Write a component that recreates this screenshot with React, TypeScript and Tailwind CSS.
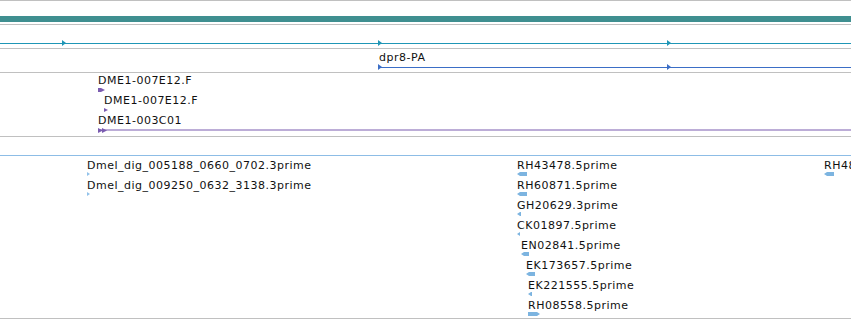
import React from 'react';

type Dir = 'left' | 'right';

interface GlyphProps {
  w: number;
  h: number;
  dir: Dir;
  color: string;
  head?: number;
  className?: string;
  style?: React.CSSProperties;
}

// feature glyph: a box with a pointed end (just a triangle when head >= w)
function Glyph({ w, h, dir, color, head, className = '', style }: GlyphProps) {
  const hd = Math.min(head ?? w, w);
  const pts = dir === 'right'
    ? `0,0 ${w - hd},0 ${w},${h / 2} ${w - hd},${h} 0,${h}`
    : `${w},0 ${hd},0 0,${h / 2} ${hd},${h} ${w},${h}`;
  return (
    <svg className={`block shrink-0 ${className}`} style={style} width={w} height={h} viewBox={`0 0 ${w} ${h}`}>
      <polygon points={pts} fill={color} />
    </svg>
  );
}

const TEAL = '#1f96b6';
const TRANSCRIPT = '#3b6ec6';
const PURPLE = '#7b5cb0';
const EST = '#7cb4e0';
const EST_LIGHT = '#92c2ea';

interface Feature {
  label: string;
  dx: number; // offset from the column start
  w: number;
  dir: Dir;
}

// each column sits at its genomic x on the canvas, rows stack by flow
const EST_COLUMNS: { x: number; color: string; rows: Feature[] }[] = [
  {
    x: 87,
    color: EST_LIGHT,
    rows: [
      { label: 'Dmel_dig_005188_0660_0702.3prime', dx: 0, w: 3, dir: 'right' },
      { label: 'Dmel_dig_009250_0632_3138.3prime', dx: 0, w: 3, dir: 'right' },
    ],
  },
  {
    x: 517,
    color: EST,
    rows: [
      { label: 'RH43478.5prime', dx: 0, w: 10, dir: 'left' },
      { label: 'RH60871.5prime', dx: 0, w: 10, dir: 'left' },
      { label: 'GH20629.3prime', dx: 0, w: 4, dir: 'left' },
      { label: 'CK01897.5prime', dx: 0, w: 3, dir: 'left' },
      { label: 'EN02841.5prime', dx: 4, w: 8, dir: 'left' },
      { label: 'EK173657.5prime', dx: 9, w: 9, dir: 'left' },
      { label: 'EK221555.5prime', dx: 11, w: 4, dir: 'left' },
      { label: 'RH08558.5prime', dx: 11, w: 12, dir: 'right' },
    ],
  },
  {
    x: 824,
    color: EST,
    rows: [{ label: 'RH48819.5prime', dx: 0, w: 10, dir: 'left' }],
  },
];

const CLONES: Feature[] = [
  { label: 'DME1-007E12.F', dx: 0, w: 7, dir: 'right' },
  { label: 'DME1-007E12.F', dx: 6, w: 4, dir: 'right' },
];

export default function App() {
  return (
    <div
      className="w-[851px] h-[320px] overflow-hidden bg-white text-[11px] leading-[13px] tracking-[0.5px] text-[#111]"
      style={{ fontFamily: '"DejaVu Sans", "Liberation Sans", sans-serif' }}
    >
      {/* gene span bar */}
      <div className="h-[24px] border-t border-[#c0c0c0] pt-[15px]">
        <div className="h-[6px] bg-[#3f8f90]" />
      </div>

      {/* gene model */}
      <div className="relative h-[24px] border-t border-[#c0c0c0] pt-[18px]">
        <div className="h-px" style={{ background: TEAL }} />
        <Glyph className="absolute top-[15px] left-[62px]" w={4} h={6} dir="right" color={TEAL} />
        <Glyph className="absolute top-[15px] left-[378px]" w={4} h={6} dir="right" color={TEAL} />
        <Glyph className="absolute top-[15px] left-[667px]" w={4} h={6} dir="right" color={TEAL} />
      </div>

      {/* transcript */}
      <div className="relative h-[24px] border-t border-[#c0c0c0] pl-[379px] pt-[2px]">
        <div className="whitespace-nowrap">dpr8-PA</div>
        <div className="mt-[3px] h-px" style={{ background: TRANSCRIPT }} />
        <Glyph className="absolute top-[15px] left-[378px]" w={4} h={6} dir="right" color={TRANSCRIPT} />
        <Glyph className="absolute top-[15px] left-[667px]" w={4} h={6} dir="right" color={TRANSCRIPT} />
      </div>

      {/* clone ends */}
      <div className="h-[64px] border-t border-[#c0c0c0] pl-[98px] pt-[1px] flex flex-col">
        {CLONES.map((c, i) => (
          <div key={i} className="h-[20px]" style={{ paddingLeft: c.dx }}>
            <div className="whitespace-nowrap">{c.label}</div>
            <Glyph className="mt-px" w={c.w} h={4} dir={c.dir} head={4} color={PURPLE} />
          </div>
        ))}
        <div className="h-[20px]">
          <div className="whitespace-nowrap">DME1-003C01</div>
          <div className="mt-px flex items-center">
            <Glyph w={5} h={5} dir="right" color={PURPLE} />
            <Glyph className="-ml-px" w={5} h={5} dir="right" color={PURPLE} />
            <div className="flex-1 h-px -ml-[9px] translate-y-[-0.5px]" style={{ background: PURPLE }} />
          </div>
        </div>
      </div>

      <div className="h-[19px] border-t border-[#c0c0c0]" />

      {/* ESTs */}
      <div className="relative h-[163px] border-t border-[#8dbde6]">
        {EST_COLUMNS.map((col) => (
          <div key={col.x} className="absolute top-0 pt-[3px] flex flex-col" style={{ left: col.x }}>
            {col.rows.map((r) => (
              <div key={r.label} className="h-[20px]" style={{ paddingLeft: r.dx }}>
                <div className="whitespace-nowrap">{r.label}</div>
                <Glyph w={r.w} h={4} dir={r.dir} head={3} color={col.color} />
              </div>
            ))}
          </div>
        ))}
      </div>

      <div className="h-[2px] border-t border-[#c0c0c0]" />
    </div>
  );
}
